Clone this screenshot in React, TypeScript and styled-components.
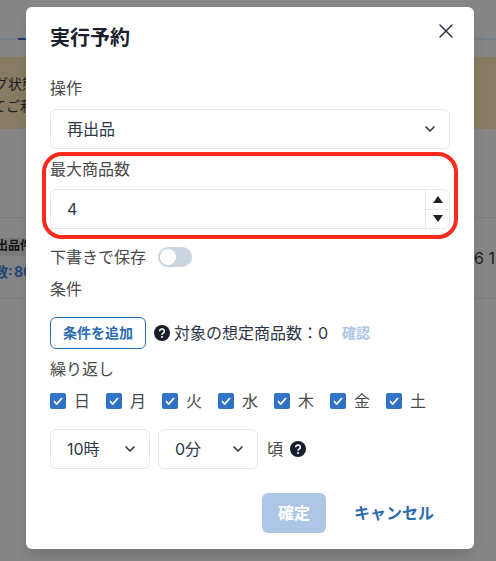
import React from "react";
import styled, { createGlobalStyle } from "styled-components";
import { ChevronDown, X } from "lucide-react";

const Global = createGlobalStyle`
  html, body { margin: 0; padding: 0; width: 496px; height: 561px; overflow: hidden; }
  body { font-family: Inter, "Noto Sans CJK JP", sans-serif; color: #2d3748; background: #858585; }
  * { box-sizing: border-box; }
`;

const Page = styled.div`
  position: relative;
  width: 496px;
  height: 561px;
  overflow: hidden;
  background: #858585;
`;

const Backdrop = styled.div`
  padding-top: 38px;
  font-size: 14px;
  color: #1a1a1a;
`;

const TabLine = styled.div`
  height: 2px;
  background: #767d85;
  display: flex;
  padding-left: 18px;
`;

const ActiveTab = styled.div`
  width: 10px;
  height: 2px;
  background: #1f3f66;
`;

const Banner = styled.div`
  margin-top: 17px;
  height: 72px;
  padding-top: 4px;
  background: #877b63;
  display: flex;
  flex-direction: column;
  justify-content: center;
  line-height: 22px;
  overflow: hidden;
  white-space: nowrap;
`;

const BannerLine = styled.div<{ $shift: number }>`
  margin-left: ${(p) => p.$shift}px;
`;

const RowRule = styled.div<{ $top: number }>`
  height: 1px;
  background: #7b7b7b;
  margin-top: ${(p) => p.$top}px;
`;

const BackRow = styled.div`
  margin-top: 20px;
  height: 60px;
  display: flex;
  white-space: nowrap;
  overflow: hidden;
`;

const BackLeft = styled.div`
  width: 474px;
  flex: none;
  display: flex;
  flex-direction: column;
  align-items: flex-start;
  font-weight: 700;
`;

const BackHead = styled.span`
  width: 60px;
  height: 18px;
  font-size: 12px;
  line-height: 15px;
  text-indent: -4px;
  background: #7a7a7a;
  color: #111;
`;

const BackCount = styled.span`
  margin: 5px 0 0 -6px;
  font-size: 14px;
  line-height: 22px;
  word-spacing: -2px;
  color: #1e4474;
`;

const BackRight = styled.div`
  font-size: 16px;
  line-height: 20px;
  padding-top: 10px;
  color: #1c1c1c;
`;

const Modal = styled.section`
  position: absolute;
  left: 26px;
  top: 7px;
  width: 448px;
  height: 542px;
  background: #fff;
  border-radius: 6px;
  box-shadow: 0 10px 15px -3px rgba(0,0,0,.1), 0 4px 6px -2px rgba(0,0,0,.05);
  display: flex;
  flex-direction: column;
`;

const Header = styled.header`
  padding: 16px 24px 0;
  height: 69px;
  font-size: 20px;
  line-height: 30px;
  font-weight: 600;
  color: #1a202c;
`;

const CloseButton = styled.button`
  position: absolute;
  top: 8px;
  right: 12px;
  width: 32px;
  height: 32px;
  border: 0;
  padding: 0;
  background: transparent;
  display: flex;
  align-items: center;
  justify-content: center;
  color: #2d3748;
`;

const Body = styled.div`
  padding: 0 24px;
  flex: 1;
  display: flex;
  flex-direction: column;
`;

const Label = styled.div`
  font-size: 16px;
  line-height: 24px;
  height: 24px;
  margin-bottom: 8px;
  color: #4a4a4a;
`;

const FirstLabel = styled(Label)`
  margin-bottom: 9px;
`;

const Raised = styled.span`
  margin-bottom: 2px;
`;

const Field = styled.div<{ $width?: number }>`
  position: relative;
  height: 40px;
  flex: none;
  width: ${(p) => (p.$width ? `${p.$width}px` : "100%")};
  border: 1px solid #e2e8f0;
  border-radius: 6px;
  background: #fff;
  padding: 0 16px;
  display: flex;
  align-items: center;
  justify-content: space-between;
  font-size: 16px;
  color: #2d3748;
`;

const Arrow = styled(ChevronDown)`
  margin-right: -5px;
  flex: none;
`;

const Stepper = styled.div`
  position: absolute;
  right: 0;
  top: 0;
  bottom: 0;
  width: 24px;
  border-left: 1px solid #e2e8f0;
  display: flex;
  flex-direction: column;
`;

const Step = styled.div<{ $line?: boolean }>`
  flex: 1;
  display: flex;
  align-items: center;
  justify-content: center;
  ${(p) => (p.$line ? "border-top: 1px solid #e2e8f0;" : "")}
`;

const Highlight = styled.div`
  position: absolute;
  left: 42px;
  top: 152px;
  width: 416px;
  height: 87px;
  border: 4px solid #fb2a1c;
  border-radius: 20px;
  pointer-events: none;
`;

const SpacedLabel = styled(Label)`
  margin-top: 8px;
`;

const DraftRow = styled.div`
  margin-top: 16px;
  height: 24px;
  display: flex;
  align-items: center;
  gap: 12px;
  font-size: 16px;
  color: #4a4a4a;
`;

const Toggle = styled.div`
  width: 34px;
  height: 20px;
  border-radius: 10px;
  background: #cbd5e0;
  padding: 2px;
`;

const Knob = styled.div`
  width: 16px;
  height: 16px;
  border-radius: 50%;
  background: #fff;
`;

const ConditionRow = styled.div`
  margin-top: 8px;
  height: 32px;
  display: flex;
  align-items: center;
  font-size: 16px;
  color: #2d3748;
`;

const OutlineButton = styled.button`
  width: 96px;
  height: 32px;
  border: 1px solid #2b6cb0;
  border-radius: 6px;
  background: #fff;
  color: #2b6cb0;
  font: 600 14px Inter, "Noto Sans CJK JP", sans-serif;
  padding: 0 0 2px;
  margin-right: 8px;
`;

const Hint = styled.span`
  margin: 0 4px 0 0;
  display: inline-flex;
`;

const ConfirmLink = styled.span`
  margin: 0 0 2px 14px;
  font-size: 14px;
  font-weight: 600;
  color: #aec6e6;
`;

const Days = styled.div`
  height: 24px;
  display: flex;
  gap: 8px;
`;

const Day = styled.label`
  width: 48px;
  display: flex;
  align-items: center;
  gap: 8px;
  height: 24px;
  font-size: 16px;
  color: #4a4a4a;
`;

const Check = styled.span`
  width: 16px;
  height: 16px;
  border-radius: 2px;
  background: #3173c6;
  display: flex;
  align-items: center;
  justify-content: center;
  flex: none;
`;

const TimeRow = styled.div`
  margin-top: 16px;
  display: flex;
  align-items: center;
  gap: 8px;
`;

const TimeSuffix = styled.span`
  margin-left: 1px;
  font-size: 16px;
  color: #4a4a4a;
  display: flex;
  align-items: center;
  gap: 7px;
`;

const Footer = styled.footer`
  margin-top: auto;
  padding: 0 24px 16px;
  display: flex;
  justify-content: flex-end;
  align-items: center;
`;

const PrimaryButton = styled.button`
  width: 64px;
  height: 40px;
  border: 0;
  border-radius: 6px;
  background: #aec6e6;
  color: #fff;
  font: 600 16px Inter, "Noto Sans CJK JP", sans-serif;
  padding: 0 0 3px;
`;

const GhostButton = styled.button`
  width: 112px;
  height: 40px;
  border: 0;
  margin-left: 12px;
  background: transparent;
  color: #2b6cb0;
  font: 600 16px Inter, "Noto Sans CJK JP", sans-serif;
  padding: 0 0 3px;
`;

const Help = () => (
  <svg width="16" height="16" viewBox="0 0 16 16" aria-hidden="true">
    <circle cx="8" cy="8" r="8" fill="#171e2b" />
    <path d="M5.7 6.2a2.3 2.2 0 1 1 3.5 1.9c-.8.5-1.2.9-1.2 1.6" fill="none" stroke="#fff" strokeWidth="1.6" />
    <circle cx="8" cy="12" r="1" fill="#fff" />
  </svg>
);

const Tick = () => (
  <svg width="10" height="8" viewBox="0 0 10 8" aria-hidden="true">
    <path d="M1 4.2 3.7 7 9 1" fill="none" stroke="#fff" strokeWidth="1.8" />
  </svg>
);

const Triangle = ({ up }: { up?: boolean }) => (
  <svg width="10" height="7" viewBox="0 0 10 7" aria-hidden="true">
    <path d={up ? "M5 0 10 7H0z" : "M0 0H10L5 7z"} fill="#1a202c" />
  </svg>
);

const days = ["日", "月", "火", "水", "木", "金", "土"];

export default function App() {
  return (
    <Page>
      <Global />
      <Backdrop>
        <TabLine><ActiveTab /></TabLine>
        <Banner>
          <BannerLine $shift={-6}>グ状態</BannerLine>
          <BannerLine $shift={-8}>てご利用</BannerLine>
        </Banner>
        <RowRule $top={88} />
        <BackRow>
          <BackLeft>
            <BackHead>出品件数</BackHead>
            <BackCount>数: 86</BackCount>
          </BackLeft>
          <BackRight>6 1</BackRight>
        </BackRow>
        <RowRule $top={0} />
      </Backdrop>
      <Modal>
        <Header>実行予約</Header>
        <CloseButton aria-label="閉じる"><X size={24} strokeWidth={1.5} /></CloseButton>
        <Body>
          <FirstLabel>操作</FirstLabel>
          <Field><Raised>再出品</Raised><Arrow size={16} strokeWidth={2.5} /></Field>
          <SpacedLabel>最大商品数</SpacedLabel>
          <Field>
            4
            <Stepper>
              <Step><Triangle up /></Step>
              <Step $line><Triangle /></Step>
            </Stepper>
          </Field>
          <DraftRow><Raised>下書きで保存</Raised><Toggle><Knob /></Toggle></DraftRow>
          <SpacedLabel>条件</SpacedLabel>
          <ConditionRow>
            <OutlineButton>条件を追加</OutlineButton>
            <Hint><Help /></Hint>
            <Raised>対象の想定商品数：0</Raised>
            <ConfirmLink>確認</ConfirmLink>
          </ConditionRow>
          <SpacedLabel>繰り返し</SpacedLabel>
          <Days>
            {days.map((d) => (
              <Day key={d}><Check><Tick /></Check><Raised>{d}</Raised></Day>
            ))}
          </Days>
          <TimeRow>
            <Field $width={100}><Raised>10時</Raised><Arrow size={16} strokeWidth={2.5} /></Field>
            <Field $width={100}><Raised>0分</Raised><Arrow size={16} strokeWidth={2.5} /></Field>
            <TimeSuffix><Raised>頃</Raised><Help /></TimeSuffix>
          </TimeRow>
        </Body>
        <Footer>
          <PrimaryButton>確定</PrimaryButton>
          <GhostButton>キャンセル</GhostButton>
        </Footer>
      </Modal>
      <Highlight />
    </Page>
  );
}
